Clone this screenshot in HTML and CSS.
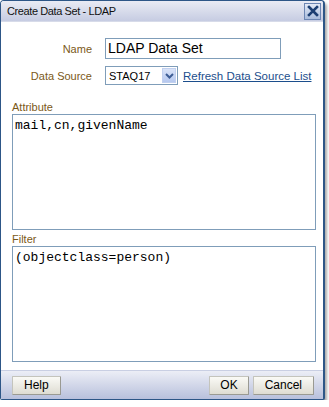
FILE: index.html
```html
<!DOCTYPE html>
<html>
<head>
  <title>Create Data Set - LDAP</title>
  <link rel="stylesheet" href="styles.css">
</head>
<body>

<div class="dialog">
  <!-- Title bar -->
  <div class="titlebar">
    <span class="title">Create Data Set - LDAP</span>
    <span class="close">
      <svg width="12" height="12" viewBox="0 0 12 12">
        <path d="M2 2 L10 10 M10 2 L2 10" stroke="#1d3f73" stroke-width="2.6" stroke-linecap="square"/>
      </svg>
    </span>
  </div>

  <div class="content">
    <div class="form">
      <label class="label">Name</label>
      <div class="field"><div class="text-input">LDAP Data Set</div></div>

      <label class="label">Data Source</label>
      <div class="field">
        <div class="select">
          <span class="select-value">STAQ17</span>
          <span class="select-arrow">
            <svg width="9" height="6" viewBox="0 0 9 6"><path d="M1 1 L4.5 4.5 L8 1" fill="none" stroke="#3d5d95" stroke-width="2"/></svg>
          </span>
        </div>
        <a class="link" href="#">Refresh Data Source List</a>
      </div>
    </div>

    <div class="section-label">Attribute</div>
    <div class="textarea">mail,cn,givenName</div>

    <div class="section-label">Filter</div>
    <div class="textarea">(objectclass=person)</div>
  </div>

  <!-- Footer buttons -->
  <div class="footer">
    <button class="btn">Help</button>
    <div class="right-buttons">
      <button class="btn ok">OK</button>
      <button class="btn">Cancel</button>
    </div>
  </div>
</div>

</body>
</html>
```

FILE: styles.css
```css
body {
  margin: 0;
  background: #fff;
  font-family: "Liberation Sans", Arial, sans-serif;
}

.dialog {
  width: 322px;
  height: 398px;
  border: 1px solid #2d5687;
  border-right-width: 2px;
  border-radius: 4px 4px 2px 2px;
  background: #fff;
  box-shadow: 2px 3px 3px #a9a9a9;
  display: flex;
  flex-direction: column;
  overflow: hidden;
}

/* Title bar */
.titlebar {
  height: 20px;
  display: flex;
  align-items: center;
  justify-content: space-between;
  padding: 0 2px 0 6px;
  background: linear-gradient(#e9ebf4, #c6cce2);
  border-bottom: 1px solid #d7dbe9;
}

.title {
  font-size: 11px;
  letter-spacing: -0.4px;
  color: #111;
}

.close {
  width: 15px;
  height: 15px;
  border: 1px solid #6d86b3;
  background: linear-gradient(#e3e9f6, #a9bcdc);
  display: flex;
  align-items: center;
  justify-content: center;
}

.content {
  flex: 1;
  padding: 16px 8px 0 11px;
}

.form {
  display: grid;
  grid-template-columns: 80px 1fr;
  column-gap: 13px;
  row-gap: 7px;
  align-items: center;
}

.label {
  text-align: right;
  font-size: 11px;
  color: #7b5918;
}

.field {
  display: flex;
  align-items: center;
  gap: 5px;
}

.text-input {
  width: 170px;
  height: 19px;
  border: 1px solid #7f9db9;
  font-size: 14px;
  line-height: 19px;
  padding: 0 2px;
  color: #000;
}

.select {
  width: 67px;
  height: 17px;
  border: 1px solid #7f9db9;
  display: flex;
  align-items: center;
  justify-content: space-between;
  padding: 0 1px 0 3px;
}

.select-value {
  font-size: 11px;
  color: #000;
}

.select-arrow {
  width: 14px;
  height: 15px;
  background: linear-gradient(#d9e3f8, #b6c8ef);
  border: 1px solid #c1d0ef;
  box-sizing: border-box;
  display: flex;
  align-items: center;
  justify-content: center;
}

.link {
  font-size: 11.5px;
  color: #1c4e8c;
  text-decoration: underline;
}

.section-label {
  font-size: 11px;
  color: #7b5918;
  margin-top: 15px;
  height: 14px;
  line-height: 14px;
}

.section-label + .textarea {
  margin-top: 0;
}

.textarea {
  width: 298px;
  height: 111px;
  border: 1px solid #7f9db9;
  padding: 3px 2px 0 2px;
  font-family: "Liberation Mono", "Courier New", monospace;
  font-size: 13px;
  color: #000;
}

.textarea + .section-label {
  margin-top: 2px;
}

/* Footer */
.footer {
  height: 28px;
  display: flex;
  align-items: center;
  justify-content: space-between;
  padding: 0 9px 0 11px;
  border-top: 1px solid #c9cfe3;
  background: linear-gradient(#eceef6, #b8c0dc);
}

.right-buttons {
  display: flex;
  gap: 4px;
}

.btn {
  height: 19px;
  padding: 0 11px;
  font-family: "Liberation Sans", Arial, sans-serif;
  font-size: 12px;
  color: #000;
  border: 1px solid #c4c4bc;
  border-right-color: #9a9a92;
  border-bottom-color: #9a9a92;
  background: linear-gradient(#fafaf6, #dedcd2);
  border-radius: 1px;
}

.btn.ok {
  padding: 0 10px;
}
```
